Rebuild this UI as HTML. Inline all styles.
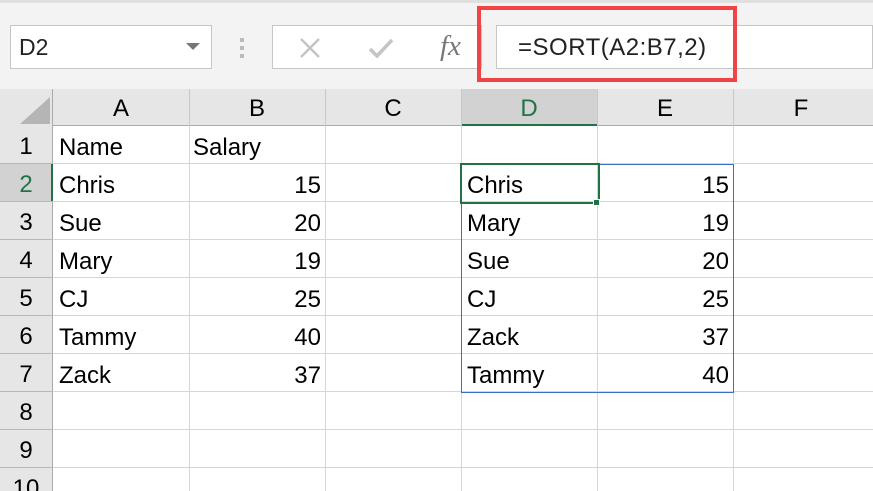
<!DOCTYPE html>
<html><head><style>
html,body{margin:0;width:873px;height:491px;overflow:hidden}
body{background:#fff;font-family:"Liberation Sans",sans-serif;position:relative}
div{position:absolute;box-sizing:border-box}
.t{font-size:24px;color:#000;line-height:38px;white-space:nowrap}
.h{font-size:24px;color:#000;text-align:center;line-height:38px}
.r{text-align:right}
</style></head><body>
<div style="left:0;top:0;width:873px;height:89px;background:#f3f3f3;border-top:3px solid #e0e0e0"></div>
<div style="left:10px;top:25px;width:202px;height:44px;background:#fff;border:1px solid #c6c6c6;font-size:23px;line-height:42px;padding-left:8px;color:#222">D2</div>
<div style="left:186px;top:43px;width:0;height:0;border-left:7px solid transparent;border-right:7px solid transparent;border-top:7px solid #777"></div>
<div style="left:240px;top:38px;width:4px;height:4px;background:#bbb"></div>
<div style="left:240px;top:46px;width:4px;height:4px;background:#bbb"></div>
<div style="left:240px;top:54px;width:4px;height:4px;background:#bbb"></div>
<div style="left:272px;top:25px;width:210px;height:44px;background:#fff;border:1px solid #c6c6c6"></div>
<svg style="position:absolute;left:298px;top:36px" width="24" height="24"><path d="M3 3L21 21M21 3L3 21" stroke="#c4c4c4" stroke-width="2.5"/></svg>
<svg style="position:absolute;left:368px;top:36px" width="26" height="24"><path d="M2 13L9 20L24 4" stroke="#c4c4c4" stroke-width="3.5" fill="none"/></svg>
<div style="left:440px;top:29px;font-family:'Liberation Serif',serif;font-style:italic;font-size:29px;color:#777;line-height:34px">fx</div>
<div style="left:496px;top:25px;width:377px;height:44px;background:#fff;border:1px solid #c6c6c6"></div>
<div style="left:518px;top:25px;font-size:24px;line-height:46px;color:#222;letter-spacing:0.5px">=SORT(A2:B7,2)</div>
<div style="left:477px;top:6px;width:260px;height:76px;border:4px solid #f04444"></div>
<!-- headers -->
<div style="left:0;top:89px;width:873px;height:37px;background:#e6e6e6;border-bottom:1px solid #aaa"></div>
<div style="left:0;top:89px;width:53px;height:402px;background:#e6e6e6;border-right:1px solid #aaa"></div>
<div style="left:20px;top:97px;width:0;height:0;border-left:30px solid transparent;border-bottom:27px solid #b5b5b5"></div>
<div style="left:461px;top:89px;width:136px;height:37px;background:#d2d2d2;border-bottom:2px solid #217346"></div>
<div style="left:0;top:164px;width:53px;height:38px;background:#d2d2d2;border-right:2px solid #217346"></div>
<div class="h" style="left:53px;top:90px;width:136px">A</div>
<div class="h" style="left:189px;top:90px;width:136px">B</div>
<div class="h" style="left:325px;top:90px;width:136px">C</div>
<div class="h" style="left:461px;top:90px;width:136px;color:#217346">D</div>
<div class="h" style="left:597px;top:90px;width:136px">E</div>
<div class="h" style="left:733px;top:90px;width:136px">F</div>
<div style="left:189px;top:89px;width:1px;height:37px;background:#c8c8c8"></div>
<div style="left:325px;top:89px;width:1px;height:37px;background:#c8c8c8"></div>
<div style="left:461px;top:89px;width:1px;height:37px;background:#c8c8c8"></div>
<div style="left:597px;top:89px;width:1px;height:37px;background:#c8c8c8"></div>
<div style="left:733px;top:89px;width:1px;height:37px;background:#c8c8c8"></div>
<!-- grid -->
<div style="left:53px;top:126px;width:820px;height:365px;background:
repeating-linear-gradient(to bottom,transparent 0,transparent 37px,#d6d6d6 37px,#d6d6d6 38px),
linear-gradient(to right,transparent 136px,#d6d6d6 136px,#d6d6d6 137px,transparent 137px,transparent 272px,#d6d6d6 272px,#d6d6d6 273px,transparent 273px,transparent 408px,#d6d6d6 408px,#d6d6d6 409px,transparent 409px,transparent 544px,#d6d6d6 544px,#d6d6d6 545px,transparent 545px,transparent 680px,#d6d6d6 680px,#d6d6d6 681px,transparent 681px)"></div>
<div style="left:0;top:126px;width:53px;height:365px;background:repeating-linear-gradient(to bottom,transparent 0,transparent 37px,#b8b8b8 37px,#b8b8b8 38px)"></div>
<div class="h" style="left:0;top:128px;width:52px">1</div>
<div class="h" style="left:0;top:166px;width:52px;color:#217346">2</div>
<div class="h" style="left:0;top:204px;width:52px">3</div>
<div class="h" style="left:0;top:242px;width:52px">4</div>
<div class="h" style="left:0;top:280px;width:52px">5</div>
<div class="h" style="left:0;top:318px;width:52px">6</div>
<div class="h" style="left:0;top:356px;width:52px">7</div>
<div class="h" style="left:0;top:394px;width:52px">8</div>
<div class="h" style="left:0;top:432px;width:52px">9</div>
<div class="h" style="left:0;top:470px;width:52px">10</div>
<!-- data A/B -->
<div class="t" style="left:59px;top:129px">Name</div><div class="t" style="left:193px;top:129px">Salary</div>
<div class="t" style="left:59px;top:167px">Chris</div><div class="t r" style="left:189px;top:167px;width:132px">15</div>
<div class="t" style="left:59px;top:205px">Sue</div><div class="t r" style="left:189px;top:205px;width:132px">20</div>
<div class="t" style="left:59px;top:243px">Mary</div><div class="t r" style="left:189px;top:243px;width:132px">19</div>
<div class="t" style="left:59px;top:281px">CJ</div><div class="t r" style="left:189px;top:281px;width:132px">25</div>
<div class="t" style="left:59px;top:319px">Tammy</div><div class="t r" style="left:189px;top:319px;width:132px">40</div>
<div class="t" style="left:59px;top:357px">Zack</div><div class="t r" style="left:189px;top:357px;width:132px">37</div>
<!-- D/E -->
<div style="left:461px;top:164px;width:273px;height:229px;border:1px solid #3b6fc4"></div>
<div style="left:460px;top:163px;width:140px;height:41px;border:2px solid #217346"></div>
<div style="left:593px;top:199px;width:7px;height:7px;background:#217346;border:1px solid #fff"></div>
<div class="t" style="left:467px;top:167px">Chris</div><div class="t r" style="left:597px;top:167px;width:132px">15</div>
<div class="t" style="left:467px;top:205px">Mary</div><div class="t r" style="left:597px;top:205px;width:132px">19</div>
<div class="t" style="left:467px;top:243px">Sue</div><div class="t r" style="left:597px;top:243px;width:132px">20</div>
<div class="t" style="left:467px;top:281px">CJ</div><div class="t r" style="left:597px;top:281px;width:132px">25</div>
<div class="t" style="left:467px;top:319px">Zack</div><div class="t r" style="left:597px;top:319px;width:132px">37</div>
<div class="t" style="left:467px;top:357px">Tammy</div><div class="t r" style="left:597px;top:357px;width:132px">40</div>
</body></html>
